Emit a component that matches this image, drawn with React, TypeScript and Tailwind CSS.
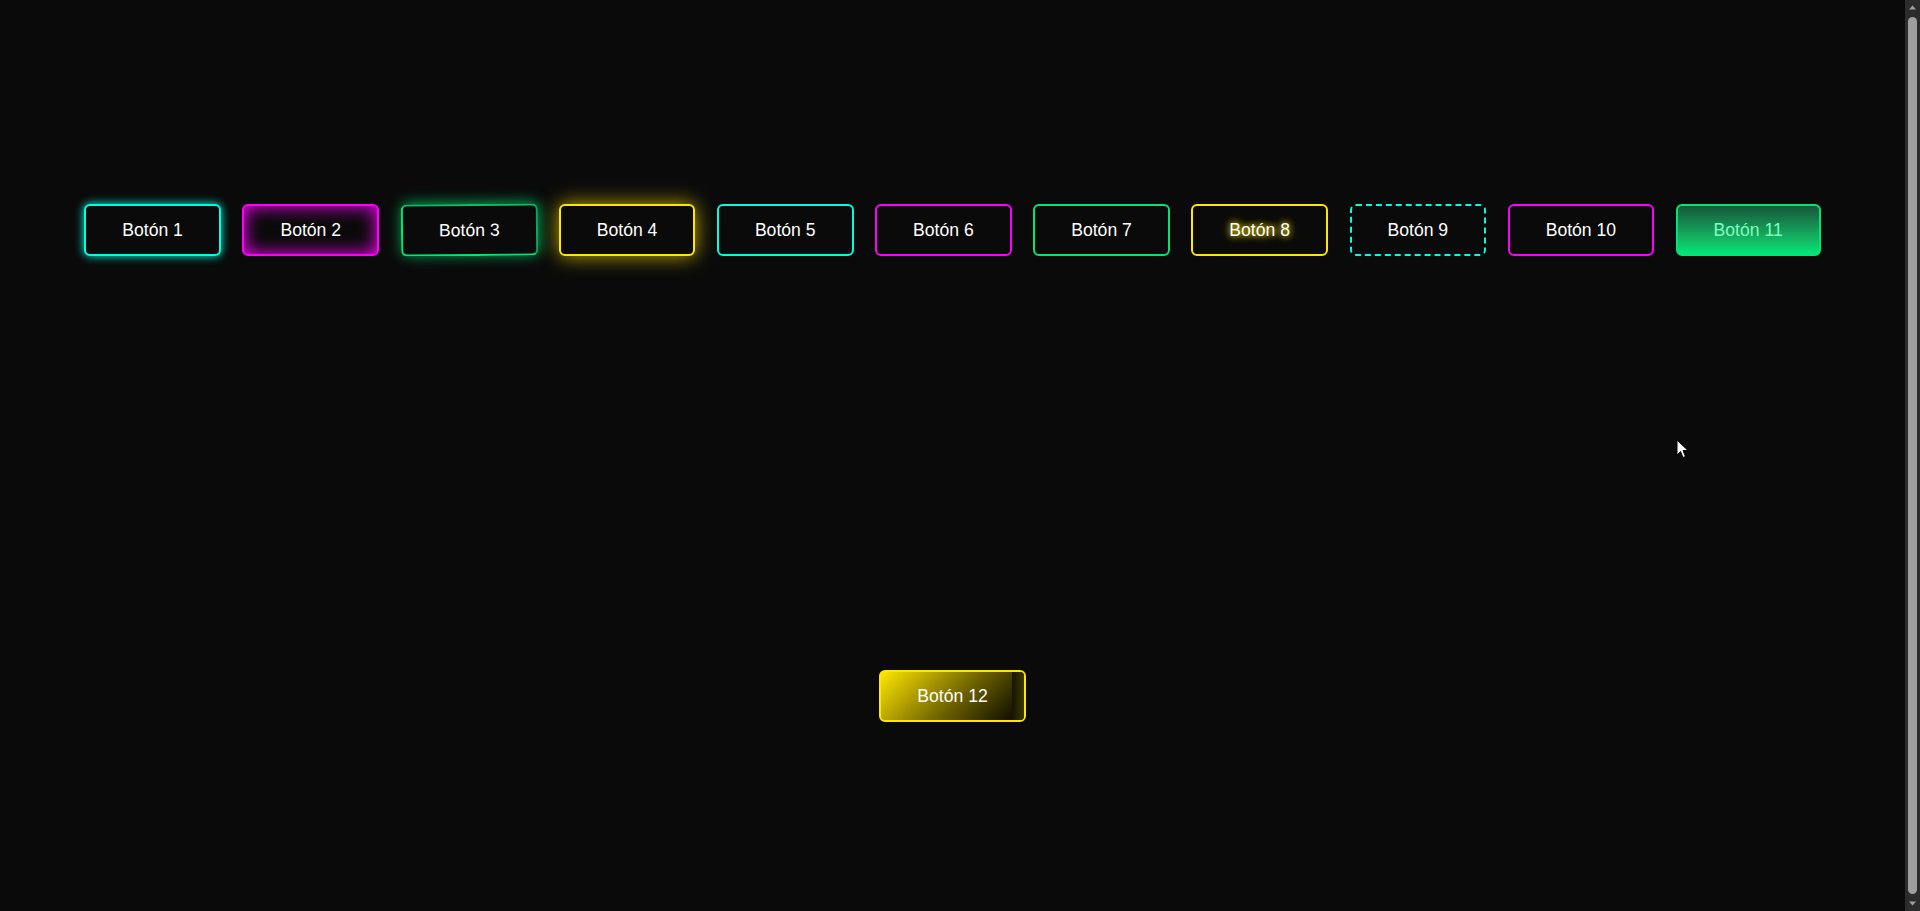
export default function App() {
  const base =
    "h-[52px] rounded-[6px] border-2 px-[36px] text-[17.6px] leading-[20px] text-white bg-[#0a0a0a] whitespace-nowrap";

  return (
    <div
      className="relative h-[911px] w-full overflow-hidden bg-[#0a0a0a] flex"
      style={{ fontFamily: '"Liberation Sans", Arial, sans-serif' }}
    >
      <div className="flex-1 flex flex-col items-center pt-[204px]">
        <div className="flex justify-center gap-[21.5px]">
          <button className={`${base} border-[#00ffe1] shadow-[0_0_10px_#00ffe1]`}>Botón 1</button>
          <button className={`${base} border-[#ff00ff] shadow-[inset_0_0_18px_#ff00ff]`}>Botón 2</button>
          <button
            className={`${base} border-[#00e676] -rotate-[0.5deg] shadow-[1px_-1px_14px_rgba(0,230,118,0.75)] border-r-[#10a35a] border-t-[#14b866]`}
          >
            Botón 3
          </button>
          <button className={`${base} border-[#ffe600] shadow-[0_0_20px_rgba(255,230,0,0.75)]`}>Botón 4</button>
          <button className={`${base} border-[#00ffe1]`}>Botón 5</button>
          <button className={`${base} border-[#ff00ff]`}>Botón 6</button>
          <button className={`${base} border-[#00e676]`}>Botón 7</button>
          <button
            className={`${base} border-[#ffe600] [text-shadow:0_0_6px_#ffe600,0_0_10px_rgba(255,230,0,0.6)]`}
          >
            Botón 8
          </button>
          <button className={`${base} border-dashed border-[#00ffe1]`}>Botón 9</button>
          <button className={`${base} border-[#ff00ff]`}>Botón 10</button>
          <button className="h-[52px] rounded-[6px] border-2 border-[#00e676] px-[36px] text-[17.6px] leading-[20px] text-[#7dffbf] whitespace-nowrap bg-gradient-to-b from-[#14573a] to-[#00e676]">
            Botón 11
          </button>
        </div>
        <div className="flex justify-center mt-[414px]">
          <button className="relative overflow-hidden h-[52px] rounded-[6px] border-2 border-[#ffe600] px-[36px] text-[17.6px] leading-[20px] text-white whitespace-nowrap bg-[linear-gradient(135deg,#ffe600_0%,#6b6000_55%,#000_100%)]">
            <span className="relative z-10">Botón 12</span>
            <span className="absolute top-0 right-0 h-full w-[12px] bg-[linear-gradient(90deg,#161500,#3a3600)]" />
          </button>
        </div>
      </div>

      {/* scrollbar */}
      <div className="w-[15px] h-full bg-[#2c2c2c] flex flex-col items-center">
        <svg width="15" height="15" viewBox="0 0 15 15" className="shrink-0">
          <path d="M4 9.5 L7.5 5.5 L11 9.5 Z" fill="#9f9f9f" />
        </svg>
        <div className="flex-1 w-[9px] rounded-full bg-[#9f9f9f] my-[2px]" />
        <svg width="15" height="15" viewBox="0 0 15 15" className="shrink-0">
          <path d="M4 5.5 L7.5 9.5 L11 5.5 Z" fill="#9f9f9f" />
        </svg>
      </div>

      {/* mouse cursor */}
      <svg
        className="absolute left-[1676px] top-[439px]"
        width="13"
        height="20"
        viewBox="0 0 13 20"
      >
        <path
          d="M1 1 L1 16 L4.5 12.5 L7 18.5 L9.5 17.5 L7 11.5 L12 11.5 Z"
          fill="#ffffff"
          stroke="#000000"
          strokeWidth="1"
        />
      </svg>
    </div>
  );
}
